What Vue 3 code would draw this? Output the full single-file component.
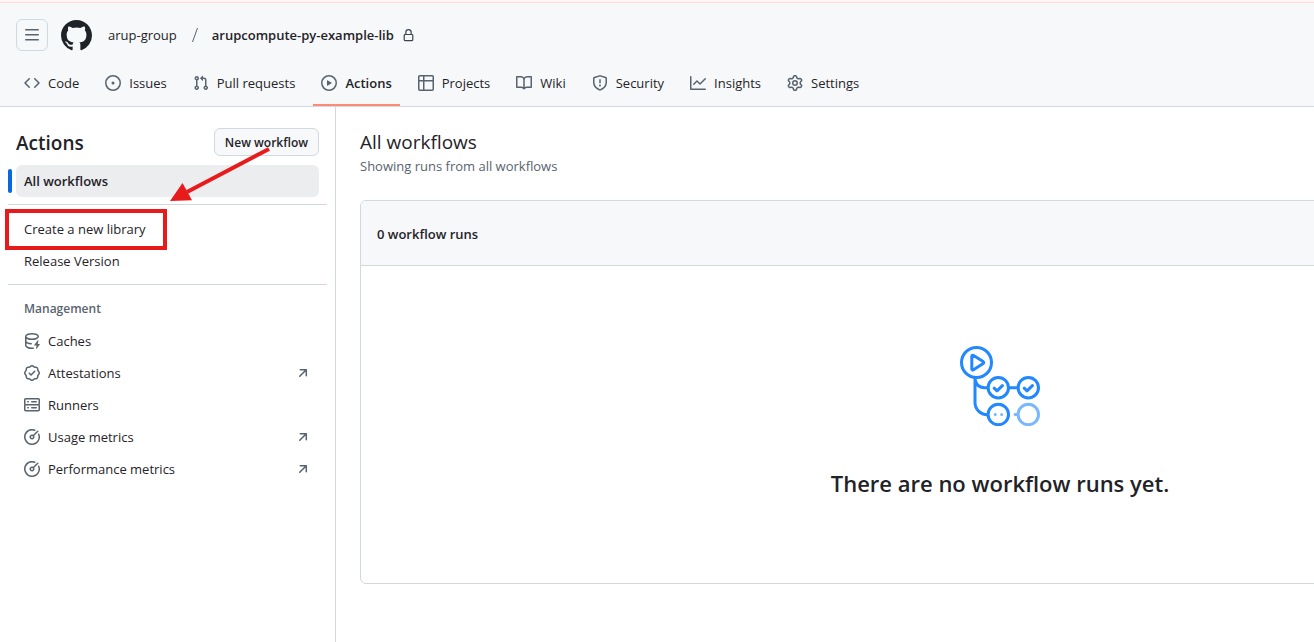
<script setup>
const icons = {
  menu: 'M1 2.75A.75.75 0 0 1 1.75 2h12.5a.75.75 0 0 1 0 1.5H1.75A.75.75 0 0 1 1 2.75Zm0 5A.75.75 0 0 1 1.75 7h12.5a.75.75 0 0 1 0 1.5H1.75A.75.75 0 0 1 1 7.75ZM1.75 12h12.5a.75.75 0 0 1 0 1.5H1.75a.75.75 0 0 1 0-1.5Z',
  mark: 'M8 0c4.42 0 8 3.58 8 8a8.013 8.013 0 0 1-5.45 7.59c-.4.08-.55-.17-.55-.38 0-.27.01-1.13.01-2.2 0-.75-.25-1.23-.54-1.48 1.78-.2 3.65-.88 3.65-3.95 0-.88-.31-1.59-.82-2.15.08-.2.36-1.02-.08-2.12 0 0-.67-.22-2.2.82-.64-.18-1.32-.27-2-.27-.68 0-1.36.09-2 .27-1.53-1.03-2.2-.82-2.2-.82-.44 1.1-.16 1.92-.08 2.12-.51.56-.82 1.28-.82 2.15 0 3.06 1.86 3.75 3.64 3.95-.23.2-.44.55-.51 1.07-.46.21-1.61.55-2.33-.66-.15-.24-.6-.83-1.23-.82-.67.01-.27.38.01.53.34.19.73.9.82 1.13.16.45.68 1.31 2.69.94 0 .67.01 1.3.01 1.49 0 .21-.15.45-.55.38A7.995 7.995 0 0 1 0 8c0-4.42 3.58-8 8-8Z',
  lock: 'M4 4a4 4 0 0 1 8 0v2h.25c.966 0 1.75.784 1.75 1.75v5.5A1.75 1.75 0 0 1 12.25 15h-8.5A1.75 1.75 0 0 1 2 13.25v-5.5C2 6.784 2.784 6 3.75 6H4Zm8.25 3.5h-8.5a.25.25 0 0 0-.25.25v5.5c0 .138.112.25.25.25h8.5a.25.25 0 0 0 .25-.25v-5.5a.25.25 0 0 0-.25-.25ZM10.5 6V4a2.5 2.5 0 1 0-5 0v2Z',
  arrow: 'M4.53 4.75A.75.75 0 0 1 5.28 4h6.01a.75.75 0 0 1 .75.75v6.01a.75.75 0 0 1-1.5 0v-4.2l-5.26 5.261a.749.749 0 0 1-1.275-.326.749.749 0 0 1 .215-.734L9.48 5.5h-4.2a.75.75 0 0 1-.75-.75Z',
}

const meter = 'M8 1.5a6.5 6.5 0 1 0 6.016 4.035.75.75 0 0 1 1.388-.57 8 8 0 1 1-4.37-4.37.75.75 0 0 1-.569 1.389A6.473 6.473 0 0 0 8 1.5Zm6.28.22a.75.75 0 0 1 0 1.06l-4.063 4.064a2.5 2.5 0 1 1-1.06-1.06L13.22 1.72a.75.75 0 0 1 1.06 0ZM7 8a1 1 0 1 0 2 0 1 1 0 0 0-2 0Z'

const tabs = [
  { label: 'Code', path: 'm11.28 3.22 4.25 4.25a.75.75 0 0 1 0 1.06l-4.25 4.25a.749.749 0 0 1-1.275-.326.749.749 0 0 1 .215-.734L13.94 8l-3.72-3.72a.749.749 0 0 1 .326-1.275.749.749 0 0 1 .734.215Zm-6.56 0a.751.751 0 0 1 1.042.018.751.751 0 0 1 .018 1.042L2.06 8l3.72 3.72a.749.749 0 0 1-.326 1.275.749.749 0 0 1-.734-.215L.47 8.53a.75.75 0 0 1 0-1.06Z' },
  { label: 'Issues', path: 'M8 9.5a1.5 1.5 0 1 0 0-3 1.5 1.5 0 0 0 0 3Z M8 0a8 8 0 1 1 0 16A8 8 0 0 1 8 0ZM1.5 8a6.5 6.5 0 1 0 13 0 6.5 6.5 0 0 0-13 0Z' },
  { label: 'Pull requests', path: 'M1.5 3.25a2.25 2.25 0 1 1 3 2.122v5.256a2.251 2.251 0 1 1-1.5 0V5.372A2.25 2.25 0 0 1 1.5 3.25Zm5.677-.177L9.573.677A.25.25 0 0 1 10 .854V2.5h1A2.5 2.5 0 0 1 13.5 5v5.628a2.251 2.251 0 1 1-1.5 0V5a1 1 0 0 0-1-1h-1v1.646a.25.25 0 0 1-.427.177L7.177 3.427a.25.25 0 0 1 0-.354ZM3.75 2.5a.75.75 0 1 0 0 1.5.75.75 0 0 0 0-1.5Zm0 9.5a.75.75 0 1 0 0 1.5.75.75 0 0 0 0-1.5Zm8.25.75a.75.75 0 1 0 1.5 0 .75.75 0 0 0-1.5 0Z' },
  { label: 'Actions', current: true, path: 'M8 0a8 8 0 1 1 0 16A8 8 0 0 1 8 0ZM1.5 8a6.5 6.5 0 1 0 13 0 6.5 6.5 0 0 0-13 0Zm4.879-2.773 4.264 2.559a.25.25 0 0 1 0 .428l-4.264 2.559A.25.25 0 0 1 6 10.559V5.442a.25.25 0 0 1 .379-.215Z' },
  { label: 'Projects', path: 'M0 1.75C0 .784.784 0 1.75 0h12.5C15.216 0 16 .784 16 1.75v12.5A1.75 1.75 0 0 1 14.25 16H1.75A1.75 1.75 0 0 1 0 14.25ZM6.5 6.5v8h7.75a.25.25 0 0 0 .25-.25V6.5Zm8-1.5V1.75a.25.25 0 0 0-.25-.25H6.5V5Zm-13 1.5v7.75c0 .138.112.25.25.25H5v-8ZM5 5V1.5H1.75a.25.25 0 0 0-.25.25V5Z' },
  { label: 'Wiki', path: 'M0 1.75A.75.75 0 0 1 .75 1h4.253c1.227 0 2.317.59 3 1.501A3.743 3.743 0 0 1 11.006 1h4.245a.75.75 0 0 1 .75.75v10.5a.75.75 0 0 1-.75.75h-4.507a2.25 2.25 0 0 0-1.591.659l-.622.621a.75.75 0 0 1-1.06 0l-.622-.621A2.25 2.25 0 0 0 5.258 13H.75a.75.75 0 0 1-.75-.75Zm7.251 10.324.004-5.073-.002-2.253A2.25 2.25 0 0 0 5.003 2.5H1.5v9h3.757a3.75 3.75 0 0 1 1.994.574ZM8.755 4.75l-.004 7.322a3.752 3.752 0 0 1 1.992-.572H14.5v-9h-3.495a2.25 2.25 0 0 0-2.25 2.25Z' },
  { label: 'Security', path: 'M7.467.133a1.748 1.748 0 0 1 1.066 0l5.25 1.68A1.75 1.75 0 0 1 15 3.48V7c0 1.566-.32 3.182-1.303 4.682-.983 1.498-2.585 2.813-5.032 3.855a1.697 1.697 0 0 1-1.33 0c-2.447-1.042-4.049-2.357-5.032-3.855C1.32 10.182 1 8.566 1 7V3.48a1.755 1.755 0 0 1 1.217-1.667Zm.61 1.429a.25.25 0 0 0-.153 0l-5.25 1.68a.25.25 0 0 0-.174.238V7c0 1.358.275 2.666 1.057 3.86.784 1.194 2.121 2.34 4.366 3.297a.196.196 0 0 0 .154 0c2.245-.956 3.582-2.104 4.366-3.298C13.225 9.666 13.5 8.36 13.5 7V3.48a.251.251 0 0 0-.174-.237l-5.25-1.68ZM8.75 4.75v3a.75.75 0 0 1-1.5 0v-3a.75.75 0 0 1 1.5 0ZM9 10.5a1 1 0 1 1-2 0 1 1 0 0 1 2 0Z' },
  { label: 'Insights', path: 'M1.5 1.75V13.5h13.75a.75.75 0 0 1 0 1.5H.75a.75.75 0 0 1-.75-.75V1.75a.75.75 0 0 1 1.5 0Zm14.28 2.53-5.25 5.25a.75.75 0 0 1-1.06 0L7 7.06 4.28 9.78a.751.751 0 0 1-1.042-.018.751.751 0 0 1-.018-1.042l3.25-3.25a.75.75 0 0 1 1.06 0L10 7.94l4.72-4.72a.751.751 0 0 1 1.042.018.751.751 0 0 1 .018 1.042Z' },
  { label: 'Settings', path: 'M8 0a8.2 8.2 0 0 1 .701.031C9.444.095 9.99.645 10.16 1.29l.288 1.107c.018.066.079.158.212.224.231.114.454.243.668.386.123.082.233.09.299.071l1.103-.303c.644-.176 1.392.021 1.82.63.27.385.506.792.704 1.218.315.675.111 1.422-.364 1.891l-.814.806c-.049.048-.098.147-.088.294.016.257.016.515 0 .772-.01.147.038.246.088.294l.814.806c.475.469.679 1.216.364 1.891a7.977 7.977 0 0 1-.704 1.217c-.428.61-1.176.807-1.82.63l-1.102-.302c-.067-.019-.177-.011-.3.071a5.909 5.909 0 0 1-.668.386c-.133.066-.194.158-.211.224l-.29 1.106c-.168.646-.715 1.196-1.458 1.26a8.006 8.006 0 0 1-1.402 0c-.743-.064-1.289-.614-1.458-1.26l-.289-1.106c-.018-.066-.079-.158-.212-.224a5.738 5.738 0 0 1-.668-.386c-.123-.082-.233-.09-.299-.071l-1.103.303c-.644.176-1.392-.021-1.82-.63a8.12 8.12 0 0 1-.704-1.218c-.315-.675-.111-1.422.363-1.891l.815-.806c.05-.048.098-.147.088-.294a6.214 6.214 0 0 1 0-.772c.01-.147-.038-.246-.088-.294l-.815-.806C.635 6.045.431 5.298.746 4.623a7.92 7.92 0 0 1 .704-1.217c.428-.61 1.176-.807 1.82-.63l1.102.302c.067.019.177.011.3-.071.214-.143.437-.272.668-.386.133-.066.194-.158.211-.224l.29-1.106C6.009.645 6.556.095 7.299.03 7.53.01 7.764 0 8 0Zm-.571 1.525c-.036.003-.108.036-.137.146l-.289 1.105c-.147.561-.549.967-.998 1.189-.173.086-.34.183-.5.29-.417.278-.97.423-1.529.27l-1.103-.303c-.109-.03-.175.016-.195.045-.22.312-.412.644-.573.99-.014.031-.021.11.059.19l.815.806c.411.406.562.957.53 1.456a4.709 4.709 0 0 0 0 .582c.032.499-.119 1.05-.53 1.456l-.815.806c-.081.08-.073.159-.059.19.162.346.353.677.573.989.02.03.085.076.195.046l1.102-.303c.56-.153 1.113-.008 1.53.27.161.107.328.204.501.29.447.222.85.629.997 1.189l.289 1.105c.029.109.101.143.137.146a6.6 6.6 0 0 0 1.142 0c.036-.003.108-.036.137-.146l.289-1.105c.147-.561.549-.967.998-1.189.173-.086.34-.183.5-.29.417-.278.97-.423 1.529-.27l1.103.303c.109.029.175-.016.195-.045.22-.313.411-.644.573-.99.014-.031.021-.11-.059-.19l-.815-.806c-.411-.406-.562-.957-.53-1.456a4.709 4.709 0 0 0 0-.582c-.032-.499.119-1.05.53-1.456l.815-.806c.081-.08.073-.159.059-.19a6.464 6.464 0 0 0-.573-.989c-.02-.03-.085-.076-.195-.046l-1.102.303c-.56.153-1.113.008-1.53-.27a4.44 4.44 0 0 0-.501-.29c-.447-.222-.85-.629-.997-1.189l-.289-1.105c-.029-.11-.101-.143-.137-.146a6.6 6.6 0 0 0-1.142 0ZM11 8a3 3 0 1 1-6 0 3 3 0 0 1 6 0ZM9.5 8a1.5 1.5 0 1 0-3.001.001A1.5 1.5 0 0 0 9.5 8Z' },
]

const management = [
  { label: 'Caches', path: 'M2.5 5.724V8c0 .248.238.7 1.169 1.159.874.43 2.144.745 3.62.822a.75.75 0 1 1-.078 1.498c-1.622-.085-3.102-.432-4.204-.975a5.565 5.565 0 0 1-.507-.28V12.5c0 .133.058.318.282.551.227.237.591.483 1.101.707 1.015.447 2.47.742 4.117.742.406 0 .802-.018 1.183-.052a.751.751 0 1 1 .134 1.494C8.89 15.98 8.45 16 8 16c-1.805 0-3.475-.32-4.721-.869-.623-.274-1.173-.619-1.579-1.041-.408-.425-.7-.964-.7-1.59v-9c0-.626.292-1.165.7-1.591.406-.42.956-.766 1.579-1.04C4.525.32 6.195 0 8 0c1.806 0 3.476.32 4.721.869.623.274 1.173.619 1.579 1.041.408.425.7.964.7 1.59 0 .626-.292 1.165-.7 1.591-.406.42-.956.766-1.578 1.04C11.475 6.68 9.805 7 8 7c-1.805 0-3.475-.32-4.721-.869a6.15 6.15 0 0 1-.779-.407Zm0-2.224c0 .133.058.318.282.551.227.237.591.483 1.101.707C4.898 5.205 6.353 5.5 8 5.5c1.646 0 3.101-.295 4.118-.742.508-.224.873-.471 1.1-.708.224-.232.282-.417.282-.55 0-.133-.058-.318-.282-.551-.227-.237-.591-.483-1.101-.707C11.102 1.795 9.647 1.5 8 1.5c-1.646 0-3.101.295-4.118.742-.508.224-.873.471-1.1.708-.224.232-.282.417-.282.55Z M14.49 7.582a.375.375 0 0 0-.66-.313l-3.625 4.625a.375.375 0 0 0 .295.606h2.127l-.619 2.922a.375.375 0 0 0 .666.304l3.125-4.125A.375.375 0 0 0 15.5 11h-1.778l.769-3.418Z' },
  { label: 'Attestations', external: true, path: 'm9.585.52.929.68c.153.112.331.186.518.215l1.138.175a2.678 2.678 0 0 1 2.24 2.24l.174 1.139c.029.187.103.365.215.518l.68.928a2.677 2.677 0 0 1 0 3.17l-.68.928a1.174 1.174 0 0 0-.215.518l-.175 1.138a2.678 2.678 0 0 1-2.241 2.241l-1.138.175a1.17 1.17 0 0 0-.518.215l-.928.68a2.677 2.677 0 0 1-3.17 0l-.928-.68a1.174 1.174 0 0 0-.518-.215L3.83 14.41a2.678 2.678 0 0 1-2.24-2.24l-.175-1.138a1.17 1.17 0 0 0-.215-.518l-.68-.928a2.677 2.677 0 0 1 0-3.17l.68-.928c.112-.153.186-.331.215-.518l.175-1.14a2.678 2.678 0 0 1 2.24-2.24l1.139-.175c.187-.029.365-.103.518-.215l.928-.68a2.677 2.677 0 0 1 3.17 0ZM7.303 1.728l-.927.68a2.67 2.67 0 0 1-1.18.489l-1.137.174a1.179 1.179 0 0 0-.987.987l-.174 1.136a2.677 2.677 0 0 1-.489 1.18l-.68.928a1.18 1.18 0 0 0 0 1.394l.68.927c.256.348.424.753.489 1.18l.174 1.137c.078.509.478.909.987.987l1.136.174a2.67 2.67 0 0 1 1.18.489l.928.68c.414.305.979.305 1.394 0l.927-.68a2.67 2.67 0 0 1 1.18-.489l1.137-.174a1.18 1.18 0 0 0 .987-.987l.174-1.136a2.67 2.67 0 0 1 .489-1.18l.68-.928a1.176 1.176 0 0 0 0-1.394l-.68-.927a2.686 2.686 0 0 1-.489-1.18l-.174-1.137a1.179 1.179 0 0 0-.987-.987l-1.136-.174a2.677 2.677 0 0 1-1.18-.489l-.928-.68a1.176 1.176 0 0 0-1.394 0ZM11.28 6.78l-3.75 3.75a.75.75 0 0 1-1.06 0L4.72 8.78a.751.751 0 0 1 .018-1.042.751.751 0 0 1 1.042-.018L7 8.94l3.22-3.22a.751.751 0 0 1 1.042.018.751.751 0 0 1 .018 1.042Z' },
  { label: 'Runners', path: 'M1.75 1h12.5c.966 0 1.75.784 1.75 1.75v4c0 .372-.116.717-.314 1 .198.283.314.628.314 1v4a1.75 1.75 0 0 1-1.75 1.75H1.75A1.75 1.75 0 0 1 0 12.75v-4c0-.358.109-.707.314-1a1.739 1.739 0 0 1-.314-1v-4C0 1.784.784 1 1.75 1ZM1.5 2.75v4c0 .138.112.25.25.25h12.5a.25.25 0 0 0 .25-.25v-4a.25.25 0 0 0-.25-.25H1.75a.25.25 0 0 0-.25.25Zm.25 5.75a.25.25 0 0 0-.25.25v4c0 .138.112.25.25.25h12.5a.25.25 0 0 0 .25-.25v-4a.25.25 0 0 0-.25-.25ZM7 4.75A.75.75 0 0 1 7.75 4h4.5a.75.75 0 0 1 0 1.5h-4.5A.75.75 0 0 1 7 4.75ZM7.75 10h4.5a.75.75 0 0 1 0 1.5h-4.5a.75.75 0 0 1 0-1.5ZM3 4.75A.75.75 0 0 1 3.75 4h.5a.75.75 0 0 1 0 1.5h-.5A.75.75 0 0 1 3 4.75ZM3.75 10h.5a.75.75 0 0 1 0 1.5h-.5a.75.75 0 0 1 0-1.5Z' },
  { label: 'Usage metrics', external: true, path: meter },
  { label: 'Performance metrics', external: true, path: meter },
]
</script>

<template>
  <div class="page">
    <header class="header">
      <div class="crumb-bar">
        <button class="menu-button" type="button" aria-label="Open menu">
          <svg class="icon" viewBox="0 0 16 16"><path :d="icons.menu" /></svg>
        </button>
        <a class="home" href="#" aria-label="Homepage">
          <svg class="mark" viewBox="0 0 16 16"><path :d="icons.mark" /></svg>
        </a>
        <nav class="crumbs" aria-label="Breadcrumb">
          <a href="#">arup-group</a>
          <svg class="slash" viewBox="0 0 8 16" aria-hidden="true"><path d="M6.5 1 1.5 15" /></svg>
          <a class="repo" href="#">arupcompute-py-example-lib</a>
          <svg class="lock" viewBox="0 0 16 16"><path :d="icons.lock" /></svg>
        </nav>
      </div>
      <nav class="tabs" aria-label="Repository">
        <a v-for="tab in tabs" :key="tab.label" href="#" class="tab" :class="{ current: tab.current }">
          <svg class="icon" viewBox="0 0 16 16"><path fill-rule="evenodd" :d="tab.path" /></svg>
          <span>{{ tab.label }}</span>
        </a>
      </nav>
    </header>

    <div class="body">
      <aside class="sidebar">
        <div class="side-head">
          <h2>Actions</h2>
          <button class="new-button" type="button">New workflow</button>
        </div>
        <ul class="list">
          <li><a class="item selected" href="#">All workflows</a></li>
        </ul>
        <ul class="list divided">
          <li><a class="item marked" href="#">Create a new library</a></li>
          <li><a class="item" href="#">Release Version</a></li>
        </ul>
        <section class="divided">
          <h3>Management</h3>
          <ul class="list">
            <li v-for="entry in management" :key="entry.label">
              <a class="item" href="#">
                <svg class="icon" viewBox="0 0 16 16"><path fill-rule="evenodd" :d="entry.path" /></svg>
                <span>{{ entry.label }}</span>
                <svg v-if="entry.external" class="icon external" viewBox="0 0 16 16"><path :d="icons.arrow" /></svg>
              </a>
            </li>
          </ul>
        </section>
        <svg class="pointer" viewBox="0 0 102 56" aria-hidden="true">
          <path d="M99 2 17 45" stroke="#e81b1c" stroke-width="4" />
          <path d="M0 54 12.500 36 22 53.300Z" fill="#e81b1c" />
        </svg>
      </aside>

      <main class="main">
        <h1>All workflows</h1>
        <p class="sub">Showing runs from all workflows</p>
        <section class="card">
          <div class="card-head">0 workflow runs</div>
          <div class="blank">
            <svg class="flow" viewBox="0 0 80 80" fill="none" stroke="#2188ff" stroke-width="3" stroke-linecap="round" stroke-linejoin="round">
              <circle cx="16.500" cy="16.500" r="15" />
              <path d="M11.800 10.300v12.600c0 .9.900 1.400 1.700.9l9.700-6.200c.7-.5.700-1.500 0-2l-9.700-6.200c-.8-.5-1.700 0-1.700.9Z" />
              <path d="M15 32v24.500A12.200 12.200 0 0 0 27.200 68.700M15 32c0 6 4 9.700 9.500 9.700h3.500M49 41.700h9" />
              <circle cx="38.300" cy="41.700" r="10.200" />
              <circle cx="68.300" cy="41.700" r="10.200" />
              <circle cx="38.300" cy="68.500" r="10.200" />
              <path d="m34.200 42.200 2.800 2.600 5.400-5.200M64.200 42.200l2.800 2.600 5.400-5.200" />
              <g stroke="#79b8ff">
                <circle cx="68.300" cy="68.500" r="10.200" />
                <path d="M55 68.500h2.500M35.200 68.500h.1M41.600 68.500h.1" />
              </g>
            </svg>
            <h2>There are no workflow runs yet.</h2>
          </div>
        </section>
      </main>
    </div>
  </div>
</template>

<style>
body {
  margin: 0;
  background: #fff;
}
</style>

<style scoped>
.page {
  display: flex;
  flex-direction: column;
  min-height: 100vh;
  overflow: hidden;
  font-family: "Open Sans", "Noto Sans", sans-serif;
  font-size: 13px;
  line-height: 20px;
  color: #1f2328;
}
a {
  color: inherit;
  text-decoration: none;
}
h1, h2, h3, p, ul {
  margin: 0;
  padding: 0;
}
ul {
  list-style: none;
}
button {
  box-sizing: border-box;
  font: inherit;
  color: inherit;
  border: 1px solid #d1d9e0;
  border-radius: 6px;
  background: #f6f8fa;
}
.icon {
  flex: none;
  width: 16px;
  height: 16px;
  fill: #59636e;
}
.header {
  background: #f6f8fa;
  border-top: 2px solid #fff5f5;
  border-bottom: 1px solid #d1d9e0;
}
.crumb-bar {
  display: flex;
  align-items: center;
  padding: 16px 16px 8px;
  border-top: 1px solid #ffdce0;
}
.menu-button {
  display: grid;
  place-items: center;
  width: 32px;
  height: 32px;
  padding: 0;
}
.home {
  display: flex;
  margin: 0 16px 0 13px;
}
.mark {
  width: 31px;
  height: 31px;
  fill: #1f2328;
}
.crumbs {
  display: flex;
  align-items: center;
}
.slash {
  width: 8px;
  height: 16px;
  margin: 0 13px 0 14px;
  fill: none;
  stroke: #59636e;
}
.repo {
  font-weight: 600;
}
.lock {
  width: 13px;
  height: 13px;
  margin-left: 8px;
  fill: #3d444d;
}
.tabs {
  display: flex;
  gap: 10px;
  padding: 0 16px;
}
.tab {
  display: flex;
  align-items: center;
  gap: 8px;
  height: 32px;
  padding: 8px 8px 5px;
  border-bottom: 2px solid transparent;
}
.current {
  font-weight: 600;
  border-bottom-color: #fd8c73;
}
.body {
  display: flex;
  flex: 1;
}
.sidebar {
  position: relative;
  box-sizing: border-box;
  flex: none;
  width: 336px;
  padding: 21px 8px;
  border-right: 1px solid #d1d9e0;
}
.side-head {
  display: flex;
  align-items: center;
  justify-content: space-between;
  padding: 0 8px 7px;
}
.side-head h2 {
  font-size: 19px;
  line-height: 30px;
  font-weight: 600;
}
.new-button {
  align-self: flex-start;
  height: 28px;
  padding: 1px 10px 0;
  font-size: 12px;
  font-weight: 600;
}
.list {
  padding: 0 8px;
}
.item {
  position: relative;
  display: flex;
  align-items: center;
  gap: 8px;
  height: 32px;
  padding: 0 8px;
  border-radius: 6px;
}
.selected {
  background: #ecedef;
  font-weight: 600;
}
.selected::before {
  content: "";
  position: absolute;
  left: -8px;
  top: 4px;
  width: 4px;
  height: 24px;
  border-radius: 6px;
  background: #0969da;
}
.marked::after {
  content: "";
  position: absolute;
  left: -11px;
  top: -4px;
  width: 154px;
  height: 33px;
  border: 4px solid #e81b1c;
}
.divided {
  margin-top: 7px;
  padding-top: 8px;
  border-top: 1px solid #d1d9e0;
}
.divided h3 {
  padding: 6px 16px;
  font-size: 12px;
  font-weight: 600;
  color: #59636e;
}
.external {
  margin-left: auto;
}
.pointer {
  position: absolute;
  left: 170px;
  top: 40px;
  width: 102px;
  height: 56px;
}
.main {
  flex: 1;
  min-width: 0;
  padding: 21px 24px;
}
.main h1 {
  font-size: 19px;
  line-height: 28px;
  font-weight: 400;
}
.sub {
  color: #59636e;
}
.card {
  box-sizing: border-box;
  min-width: 1280px;
  margin-top: 24px;
  border: 1px solid #d1d9e0;
  border-radius: 6px;
  overflow: hidden;
}
.card-head {
  padding: 23px 16px 21px;
  background: #f6f8fa;
  border-bottom: 1px solid #d1d9e0;
  font-weight: 600;
}
.blank {
  display: flex;
  flex-direction: column;
  align-items: center;
  gap: 38px;
  padding: 80px 32px 81px;
}
.flow {
  width: 80px;
  height: 80px;
}
.blank h2 {
  font-size: 22px;
  line-height: 38px;
  font-weight: 600;
}
</style>
